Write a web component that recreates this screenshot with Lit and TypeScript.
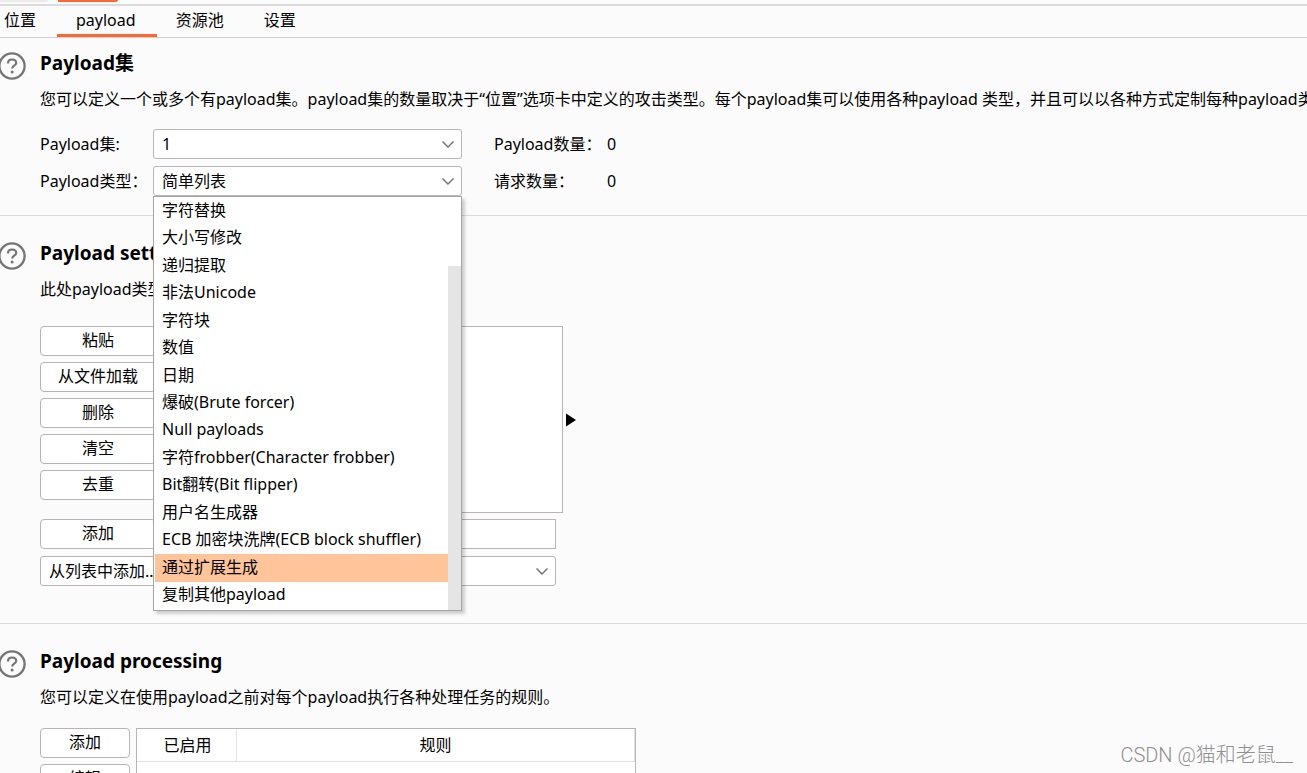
import { LitElement, html, css, svg } from "lit";
import { customElement, property, state } from "lit/decorators.js";
import { classMap } from "lit/directives/class-map.js";

const controls = css`
  * {
    box-sizing: border-box;
  }
  button,
  input,
  select {
    font: inherit;
    color: inherit;
    margin: 0;
  }
  .btn {
    height: 30px;
    padding: 0 8px 2px;
    background: #fff;
    border: 1px solid #b9b5b5;
    border-radius: 4px;
    line-height: 20px;
    white-space: nowrap;
  }
  .combo {
    position: relative;
    display: block;
  }
  .combo select {
    display: block;
    width: 100%;
    height: 30px;
    padding: 0 32px 1px 8px;
    appearance: none;
    background: #fff;
    border: 1px solid #b9b5b5;
    border-radius: 3px;
    line-height: 20px;
  }
  .chevron {
    position: absolute;
    right: 7px;
    top: 10px;
    width: 14px;
    height: 10px;
    fill: none;
    stroke: #6e6e6e;
    stroke-width: 1.4;
    pointer-events: none;
  }
`;

const chevron = html`<svg class="chevron" viewBox="0 0 14 10" aria-hidden="true">
  ${svg`<path d="M1.5 2.5 L7 8 L12.5 2.5" />`}
</svg>`;

@customElement("payload-section")
class PayloadSection extends LitElement {
  @property() heading = "";
  @property() description = "";

  static styles = css`
    :host {
      display: flex;
      align-items: flex-start;
      gap: 14px;
    }
    .help {
      flex: none;
      width: 28px;
      height: 28px;
      margin: 0 0 0 -2px;
      padding: 0;
      border: 0;
      background: none;
    }
    .help svg {
      display: block;
      width: 28px;
      height: 28px;
      fill: none;
      stroke: #757575;
    }
    .body {
      flex: 1;
      min-width: 0;
    }
    h2 {
      margin: 0;
      font-size: 19px;
      line-height: 22px;
      font-weight: 700;
      white-space: nowrap;
    }
    p {
      margin: 15px 0 20px;
      line-height: 20px;
      white-space: nowrap;
    }
  `;

  render() {
    return html`
      <button class="help" aria-label="帮助">
        <svg viewBox="0 0 28 28" aria-hidden="true">
          <circle cx="14" cy="14" r="12.6" stroke-width="2.3" />
          <path
            d="M10 11.4 C10 8.7 11.7 7.5 14 7.5 C16.4 7.5 18.2 8.8 18.2 10.9 C18.2 13.6 14.2 13.7 14.2 16.6"
            stroke-width="2.2"
          />
          <circle cx="14.1" cy="20" r="1.5" fill="#757575" stroke="none" />
        </svg>
      </button>
      <div class="body">
        <h2>${this.heading}</h2>
        <p>${this.description}</p>
        <slot></slot>
      </div>
    `;
  }
}

@customElement("type-combo")
class TypeCombo extends LitElement {
  @state() private selected = "简单列表";
  @state() private highlighted = "通过扩展生成";
  @state() private open = true;

  private types = [
    "字符替换",
    "大小写修改",
    "递归提取",
    "非法Unicode",
    "字符块",
    "数值",
    "日期",
    "爆破(Brute forcer)",
    "Null payloads",
    "字符frobber(Character frobber)",
    "Bit翻转(Bit flipper)",
    "用户名生成器",
    "ECB 加密块洗牌(ECB block shuffler)",
    "通过扩展生成",
    "复制其他payload",
  ];

  static styles = [
    controls,
    css`
      :host {
        display: block;
      }
      .popup {
        position: absolute;
        z-index: 2;
        top: 100%;
        left: 0;
        right: 0;
        height: 415px;
        display: flex;
        background: #fff;
        border: 1px solid #a5a5a5;
        box-shadow: 3px 3px 3px rgba(0, 0, 0, 0.18);
      }
      .list {
        flex: 1;
        display: grid;
        grid-auto-rows: 1fr;
        margin: 0;
        padding: 0 0 1px 1px;
        list-style: none;
      }
      .option {
        display: flex;
        align-items: center;
        padding: 0 0 2px 7px;
        line-height: 20px;
        white-space: nowrap;
        cursor: default;
      }
      .option.active {
        background: #ffc499;
      }
      .track {
        width: 13px;
        padding-top: 69px;
        display: flex;
      }
      .thumb {
        flex: 1;
        background: #e5e5e5;
      }
    `,
  ];

  private choose(type: string) {
    this.selected = type;
    this.open = false;
  }

  private toggle(event: Event) {
    event.preventDefault();
    this.open = !this.open;
  }

  render() {
    return html`
      <div class="combo">
        <select aria-label="Payload类型" @mousedown=${this.toggle}>
          <option>${this.selected}</option>
        </select>
        ${chevron}
        ${this.open
          ? html`<div class="popup">
              <ul class="list" role="listbox" aria-label="Payload类型">
                ${this.types.map(
                  (type) => html`<li
                    role="option"
                    aria-selected=${type === this.highlighted}
                    class=${classMap({ option: true, active: type === this.highlighted })}
                    @mouseenter=${() => (this.highlighted = type)}
                    @click=${() => this.choose(type)}
                  >${type}</li>`
                )}
              </ul>
              <div class="track"><div class="thumb"></div></div>
            </div>`
          : null}
      </div>
    `;
  }
}

@customElement("app-root")
class AppRoot extends LitElement {
  @state() private tab = "payload";

  static styles = [
    controls,
    css`
      :host {
        display: block;
        position: relative;
        height: 100vh;
        overflow: hidden;
        background: #fbfbfb;
        color: #000;
        font: 16px/20px "Noto Sans", "Noto Sans CJK SC", sans-serif;
      }
      .attacks {
        display: flex;
        gap: 10px;
        height: 6px;
        border-bottom: 2px solid #dcdcdc;
      }
      .attack {
        width: 48px;
        height: 2px;
        background: #ebebeb;
        border-radius: 0 0 3px 0;
      }
      .attack.current {
        width: 60px;
        background: #ff6633;
      }
      .tabs {
        display: flex;
        height: 32px;
        border-bottom: 1px solid #d0d0d0;
      }
      .tab {
        height: 31px;
        padding: 0 21px 3px 19px;
        border: 0;
        background: none;
        line-height: 20px;
      }
      .tab:first-child {
        padding-left: 4px;
      }
      .tab.active {
        border-bottom: 3px solid #ff6633;
        padding-bottom: 0;
      }
      payload-section {
        padding: 26px 0 37px;
        border-bottom: 1px solid #dadada;
      }
      payload-section.first {
        padding: 14px 0 19px;
      }
      payload-section.last {
        border: 0;
      }
      .fields {
        display: grid;
        grid-template-columns: 113px 309px 113px auto;
        align-items: center;
        row-gap: 7px;
      }
      .fields > label,
      .fields > span,
      .fields > output {
        padding-bottom: 1px;
        white-space: nowrap;
      }
      .fields > .count,
      .fields > .value {
        padding-left: 32px;
      }
      .settings {
        padding-top: 7px;
      }
      .items {
        display: grid;
        grid-template-columns: 116px 401px auto;
        column-gap: 6px;
      }
      .stack {
        display: grid;
        gap: 6px;
        align-content: start;
      }
      .values {
        height: 187px;
        background: #fff;
        border: 1px solid #b9b5b5;
      }
      .expand {
        align-self: center;
        justify-self: start;
        margin-left: -3px;
        padding: 0;
        border: 0;
        background: none;
      }
      .expand svg {
        display: block;
        width: 10px;
        height: 14px;
      }
      .add {
        display: grid;
        grid-template-columns: 116px 394px;
        column-gap: 6px;
        margin: 6px 0 7px;
      }
      .text {
        width: 100%;
        height: 30px;
        padding: 0 8px;
        background: #fff;
        border: 1px solid #b9b5b5;
        border-radius: 0;
      }
      .from-list {
        width: 516px;
      }
      .rules {
        display: grid;
        grid-template-columns: 90px 500px;
        column-gap: 6px;
        padding-top: 1px;
      }
      .frame {
        height: 200px;
        background: #fff;
        border: 1px solid #b9b5b5;
      }
      table {
        width: 100%;
        border-spacing: 0;
        table-layout: fixed;
      }
      th {
        height: 33px;
        padding: 0;
        font-weight: 400;
        border-bottom: 1px solid #e2e2e2;
        border-right: 1px solid #e2e2e2;
      }
      .enabled {
        width: 100px;
        padding-left: 2px;
      }
      .watermark {
        position: absolute;
        right: 14px;
        bottom: 6px;
        color: #8f8f8f;
        font: 20px/24px Roboto, "Noto Sans CJK SC", sans-serif;
        font-weight: 300;
      }
    `,
  ];

  render() {
    return html`
      <div class="attacks">
        <div class="attack"></div>
        <div class="attack current"></div>
      </div>
      <nav class="tabs" role="tablist">
        ${["位置", "payload", "资源池", "设置"].map(
          (name) => html`<button
            role="tab"
            aria-selected=${this.tab === name}
            class=${classMap({ tab: true, active: this.tab === name })}
            @click=${() => (this.tab = name)}
          >${name}</button>`
        )}
      </nav>

      <payload-section
        class="first"
        heading="Payload集"
        description="您可以定义一个或多个有payload集。payload集的数量取决于“位置”选项卡中定义的攻击类型。每个payload集可以使用各种payload 类型，并且可以以各种方式定制每种payload类型。"
      >
        <div class="fields">
          <label for="set">Payload集:</label>
          <div class="combo">
            <select id="set"><option>1</option></select>
            ${chevron}
          </div>
          <span class="count">Payload数量：</span>
          <output class="value">0</output>
          <span>Payload类型：</span>
          <type-combo></type-combo>
          <span class="count">请求数量：</span>
          <output class="value">0</output>
        </div>
      </payload-section>

      <payload-section heading="Payload settings" description="此处payload类型">
        <div class="settings">
          <div class="items">
            <div class="stack">
              ${["粘贴", "从文件加载", "删除", "清空", "去重"].map(
                (name) => html`<button class="btn">${name}</button>`
              )}
            </div>
            <div class="values"></div>
            <button class="expand" aria-label="展开">
              <svg viewBox="0 0 10 14" aria-hidden="true"><path d="M0 0.5 L10 7 L0 13.5 Z" /></svg>
            </button>
          </div>
          <div class="add">
            <button class="btn">添加</button>
            <input class="text" type="text" aria-label="添加" />
          </div>
          <div class="combo from-list">
            <select aria-label="从列表中添加"><option>从列表中添加...</option></select>
            ${chevron}
          </div>
        </div>
      </payload-section>

      <payload-section
        class="last"
        heading="Payload processing"
        description="您可以定义在使用payload之前对每个payload执行各种处理任务的规则。"
      >
        <div class="rules">
          <div class="stack">
            <button class="btn">添加</button>
            <button class="btn">编辑</button>
          </div>
          <div class="frame">
            <table>
              <thead>
                <tr>
                  <th class="enabled">已启用</th>
                  <th>规则</th>
                </tr>
              </thead>
            </table>
          </div>
        </div>
      </payload-section>
      <div class="watermark">CSDN @猫和老鼠__</div>
    `;
  }
}
